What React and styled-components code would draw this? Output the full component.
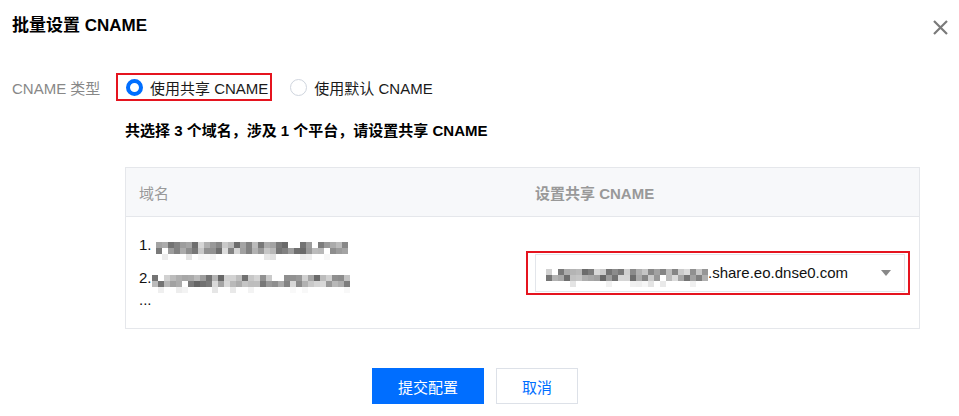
import React from "react"
import styled, { createGlobalStyle } from "styled-components"

const GlobalStyle = createGlobalStyle`
  html, body {
    margin: 0;
    padding: 0;
    background: #fff;
  }
  body {
    font-family: "Liberation Sans", "Noto Sans CJK SC", sans-serif;
    color: #000;
    -webkit-font-smoothing: antialiased;
  }
`

const Dialog = styled.div`
  width: 959px;
  height: 416px;
  box-sizing: border-box;
  padding: 0 12px;
  display: flex;
  flex-direction: column;
  background: #fff;
`

const Header = styled.div`
  height: 52px;
  display: flex;
  align-items: center;
  justify-content: space-between;
`

const Title = styled.h3`
  margin: 0;
  font-size: 17px;
  font-weight: 700;
  line-height: 24px;
`

const Close = styled.button`
  border: 0;
  background: none;
  padding: 0;
  width: 17px;
  height: 17px;
  margin-right: -2px;
  margin-top: 3px;
  display: flex;
  align-items: center;
  justify-content: center;
  cursor: pointer;
`

const FormRow = styled.div`
  margin-top: 23px;
  height: 24px;
  display: flex;
  align-items: center;
`

const Label = styled.span`
  width: 114px;
  font-size: 15px;
  color: #888;
`

const RadioGroup = styled.div`
  display: flex;
  align-items: center;
  gap: 22px;
`

const RadioItem = styled.label`
  position: relative;
  display: flex;
  align-items: center;
  gap: 7px;
  height: 24px;
  font-size: 15px;
  color: #1a1a1a;
  cursor: pointer;

  ${(p) =>
    p.$marked &&
    `
    &::after {
      content: "";
      position: absolute;
      left: -10px;
      right: -4px;
      top: -2px;
      bottom: -2px;
      border: 2px solid #e5141f;
      pointer-events: none;
    }
  `}
`

const Circle = styled.span`
  box-sizing: border-box;
  width: 17px;
  height: 17px;
  border-radius: 50%;
  border: ${(p) => (p.$checked ? "4.5px solid #006eff" : "1px solid #cfd5de")};
  background: #fff;
`

const Notice = styled.p`
  margin: 21px 0 0 113px;
  font-size: 15px;
  font-weight: 700;
  line-height: 22px;
`

const Table = styled.div`
  margin: 25px 27px 0 113px;
  border: 1px solid #e5e7eb;
  display: grid;
  grid-template-columns: 396px 1fr;
`

const HeadCell = styled.div`
  height: 49px;
  box-sizing: border-box;
  background: #f7f8fa;
  border-bottom: 1px solid #e5e7eb;
  display: flex;
  align-items: center;
  padding-left: 13px;
  font-size: 15px;
  font-weight: ${(p) => (p.$bold ? 600 : 400)};
  color: #999;
`

const DomainCell = styled.div`
  padding: 16px 13px 18px;
  font-size: 15px;
  color: #111;
`

const DomainLine = styled.div`
  display: flex;
  align-items: center;
  height: 22px;
  margin-bottom: ${(p) => p.$gap || 0}px;
`

const SelectCell = styled.div`
  display: flex;
  align-items: center;
  padding: 0 14px 0 13px;
`

const SelectBox = styled.div`
  position: relative;
  flex: 1;
  height: 38px;
  box-sizing: border-box;
  border: 1px solid #e3e6eb;
  display: flex;
  align-items: center;
  padding: 0 10px;
  font-size: 15px;
  color: #111;

  &::after {
    content: "";
    position: absolute;
    left: -10px;
    right: -6px;
    top: -4px;
    bottom: -4px;
    border: 2px solid #e5141f;
    pointer-events: none;
  }
`

const SelectValue = styled.span`
  flex: 1;
  display: flex;
  align-items: center;
`

const Arrow = styled.span`
  width: 0;
  height: 0;
  border-left: 5.5px solid transparent;
  border-right: 5.5px solid transparent;
  border-top: 6px solid #888;
  margin-right: 3px;
`

const Footer = styled.div`
  margin-top: 39px;
  display: flex;
  justify-content: center;
  gap: 12px;
  padding-right: 9px;
`

const Button = styled.button`
  height: 36px;
  min-width: ${(p) => (p.$primary ? 112 : 82)}px;
  box-sizing: border-box;
  border: 1px solid ${(p) => (p.$primary ? "#006eff" : "#dde1e8")};
  background: ${(p) => (p.$primary ? "#006eff" : "#fff")};
  color: ${(p) => (p.$primary ? "#fff" : "#006eff")};
  font-family: inherit;
  font-size: 15px;
  cursor: pointer;
`

// deterministic grey mosaic standing in for the blurred domain names
function rand(seed) {
  let s = seed
  return () => {
    s = (s * 9301 + 49297) % 233280
    return s / 233280
  }
}

function Mosaic({ width, rows = 2, seed = 1, cell = 6, offset = 4 }) {
  const r = rand(seed)
  const cols = Math.floor(width / cell)
  const cells = []
  for (let y = 0; y < rows + 1; y++) {
    for (let x = 0; x < cols; x++) {
      const v = r()
      if (y === rows && v < 0.7) continue
      if (y < rows && v > 0.93) continue
      const g = y === rows ? 225 + Math.floor(r() * 25) : 100 + Math.floor(v * 130)
      cells.push(<rect key={`${x}-${y}`} x={x * cell} y={y * cell} width={cell} height={cell} fill={`rgb(${g},${g},${g})`} />)
    }
  }
  return (
    <svg
      width={cols * cell}
      height={(rows + 1) * cell}
      style={{ display: "block", marginTop: offset * 2 + cell }}
    >
      {cells}
    </svg>
  )
}

export default function App() {
  return (
    <>
      <GlobalStyle />
      <Dialog>
        <Header>
          <Title>批量设置 CNAME</Title>
          <Close aria-label="关闭">
            <svg width="15" height="15" viewBox="0 0 15 15">
              <path d="M1 1L14 14M14 1L1 14" stroke="#7a7a7a" strokeWidth="2.2" />
            </svg>
          </Close>
        </Header>

        <FormRow>
          <Label>CNAME 类型</Label>
          <RadioGroup>
            <RadioItem $marked>
              <Circle $checked />
              使用共享 CNAME
            </RadioItem>
            <RadioItem>
              <Circle />
              使用默认 CNAME
            </RadioItem>
          </RadioGroup>
        </FormRow>

        <Notice>共选择 3 个域名，涉及 1 个平台，请设置共享 CNAME</Notice>

        <Table>
          <HeadCell>域名</HeadCell>
          <HeadCell $bold>设置共享 CNAME</HeadCell>
          <DomainCell>
            <DomainLine $gap={11}>
              1.&nbsp;<Mosaic width={194} seed={7} />
            </DomainLine>
            <DomainLine>
              2.<Mosaic width={198} seed={23} />
            </DomainLine>
            <DomainLine>...</DomainLine>
          </DomainCell>
          <SelectCell>
            <SelectBox>
              <SelectValue>
                <Mosaic width={166} seed={41} offset={2} />
                .share.eo.dnse0.com
              </SelectValue>
              <Arrow />
            </SelectBox>
          </SelectCell>
        </Table>

        <Footer>
          <Button $primary>提交配置</Button>
          <Button>取消</Button>
        </Footer>
      </Dialog>
    </>
  )
}
